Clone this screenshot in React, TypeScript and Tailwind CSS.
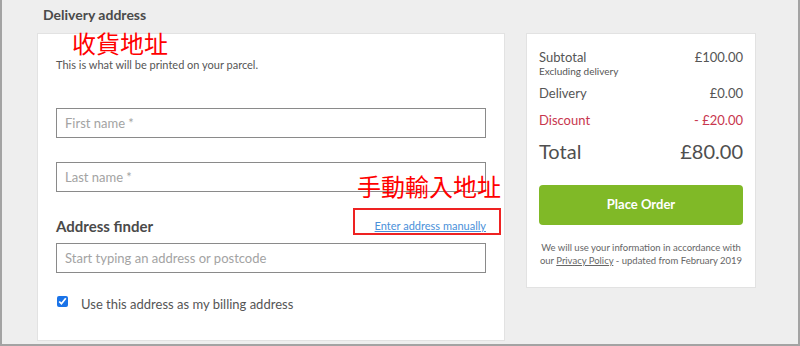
import React from "react";

const font = { fontFamily: "Lato, 'Noto Sans', sans-serif" };
const cjk = { fontFamily: "'Noto Sans CJK TC', sans-serif" };

function TextInput({ placeholder }: { placeholder: string }) {
  return (
    <input
      type="text"
      placeholder={placeholder}
      className="block h-[30px] w-[430px] border border-[#8a8a8a] bg-white px-[8px] text-[13px] text-[#444] placeholder:text-[#a3a3a3] outline-none"
    />
  );
}

function SummaryRow({ label, value, className }: { label: string; value: string; className?: string }) {
  return (
    <div className={`flex justify-between ${className ?? ""}`}>
      <span>{label}</span>
      <span>{value}</span>
    </div>
  );
}

export default function App() {
  return (
    <div
      className="relative h-[346px] w-[800px] overflow-hidden border-b-2 border-l-2 border-r-2 border-[#a3a3a3] bg-[#eeeeee]"
      style={font}
    >
      <h1 className="pl-[41px] pt-[6px] text-[14px] font-bold leading-[18px] text-[#4a4a4a]">Delivery address</h1>

      <div className="mt-[9px] flex items-start gap-[21px] pl-[35px]">
        {/* delivery form */}
        <div className="relative h-[308px] w-[468px] border border-[#e2e2e2] bg-white pl-[18px] pt-[24px]">
          <span className="absolute left-[34px] top-[-3px] text-[24px] leading-[23px] text-[#ff0000]" style={cjk}>
            收貨地址
          </span>
          <p className="text-[11px] leading-[14px] text-[#555]">This is what will be printed on your parcel.</p>

          <div className="mt-[36px]">
            <TextInput placeholder="First name *" />
          </div>
          <div className="mt-[24px]">
            <TextInput placeholder="Last name *" />
          </div>

          <div className="relative mt-[24px] flex w-[430px] items-center justify-between">
            <span className="text-[15px] font-bold leading-[20px] text-[#4a4a4a]">Address finder</span>
            <a href="#" className="text-[11px] leading-[14px] text-[#4a90d9] underline">
              Enter address manually
            </a>
            <span className="absolute right-[-15px] top-[-44px] text-[24px] leading-[28px] text-[#ff0000]" style={cjk}>
              手動輸入地址
            </span>
            <span className="absolute right-[-15px] top-[-8px] h-[27px] w-[148px] border-2 border-[#ee2222]" />
          </div>

          <div className="mt-[7px]">
            <TextInput placeholder="Start typing an address or postcode" />
          </div>

          <label className="mt-[22px] flex items-start gap-[13px] text-[13px] leading-[18px] text-[#555]">
            <input type="checkbox" defaultChecked className="ml-[1px] mt-[1px] h-[11px] w-[11px] accent-[#1a73e8]" />
            <span>Use this address as my billing address</span>
          </label>
        </div>

        {/* order summary */}
        <div className="w-[230px] border border-[#e2e2e2] bg-white px-[12px] pb-[20px] pt-[15px] text-[#555]">
          <div className="flex justify-between text-[13px] leading-[16px]">
            <div>
              <div>Subtotal</div>
              <div className="text-[10px] leading-[13px]">Excluding delivery</div>
            </div>
            <span>£100.00</span>
          </div>
          <SummaryRow label="Delivery" value="£0.00" className="mt-[7px] text-[13px] leading-[16px]" />
          <SummaryRow label="Discount" value="- £20.00" className="mt-[11px] text-[13px] leading-[16px] text-[#c8364e]" />
          <SummaryRow label="Total" value="£80.00" className="mt-[11px] text-[20px] leading-[24px] text-[#4f4f4f]" />

          <button className="mt-[22px] h-[40px] w-full rounded-[4px] bg-[#80b927] text-[13px] font-bold text-white">
            Place Order
          </button>

          <p className="mt-[16px] text-center text-[9.5px] leading-[13px] text-[#666]">
            We will use your information in accordance with
            <br />
            our <span className="underline">Privacy Policy</span> - updated from February 2019
          </p>
        </div>
      </div>
    </div>
  );
}
